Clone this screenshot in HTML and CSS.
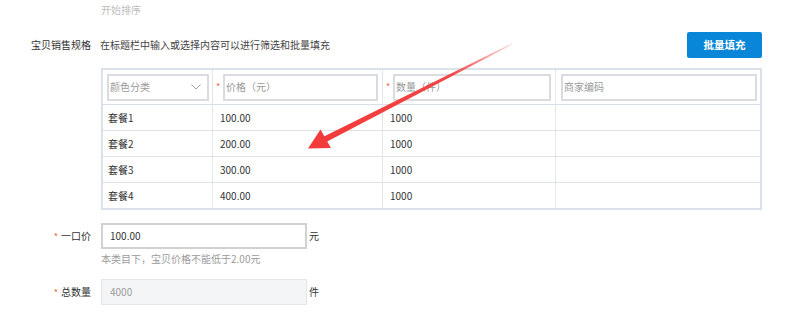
FILE: index.html
```html
<!DOCTYPE html>
<html lang="zh-CN">
<head>
<meta charset="utf-8">
<title>宝贝销售规格</title>
<link rel="stylesheet" href="styles.css">
</head>
<body>
<div class="page">
  <div class="row sort-row">
    <div class="label"></div>
    <div class="content"><span class="muted">开始排序</span></div>
  </div>

  <div class="row spec-head">
    <div class="label">宝贝销售规格</div>
    <div class="content spec-bar">
      <span class="tip">在标题栏中输入或选择内容可以进行筛选和批量填充</span>
      <button class="btn">批量填充</button>
    </div>
  </div>

  <div class="row table-row">
    <div class="label"></div>
    <div class="content">
      <div class="sku">
        <div class="hcell c1">
          <div class="input select">颜色分类
            <svg class="chev" width="10" height="6" viewBox="0 0 10 6"><path d="M0.5 0.5 L5 5 L9.5 0.5" fill="none" stroke="#a0a0a0" stroke-width="1"/></svg>
          </div>
        </div>
        <div class="hcell c2"><span class="req">*</span><div class="input">价格（元）</div></div>
        <div class="hcell c3"><span class="req">*</span><div class="input">数量（件）</div></div>
        <div class="hcell c4"><div class="input">商家编码</div></div>

        <div class="cell first">套餐1</div><div class="cell">100.00</div><div class="cell">1000</div><div class="cell"></div>
        <div class="cell first">套餐2</div><div class="cell">200.00</div><div class="cell">1000</div><div class="cell"></div>
        <div class="cell first">套餐3</div><div class="cell">300.00</div><div class="cell">1000</div><div class="cell"></div>
        <div class="cell first last">套餐4</div><div class="cell last">400.00</div><div class="cell last">1000</div><div class="cell last"></div>
      </div>
    </div>
  </div>

  <div class="row field price-row">
    <div class="label"><span class="req">*</span>一口价</div>
    <div class="content inline">
      <div class="field-input">100.00</div><span class="unit">元</span>
    </div>
  </div>
  <div class="row hint-row">
    <div class="label"></div>
    <div class="content hint">本类目下，宝贝价格不能低于2.00元</div>
  </div>

  <div class="row field qty-row">
    <div class="label"><span class="req">*</span>总数量</div>
    <div class="content inline">
      <div class="field-input disabled">4000</div><span class="unit">件</span>
    </div>
  </div>
</div>

<svg class="arrow" width="800" height="315" viewBox="0 0 800 315">
  <defs>
    <linearGradient id="ag" gradientUnits="userSpaceOnUse" x1="512" y1="44" x2="308" y2="148">
      <stop offset="0" stop-color="#f23a3a" stop-opacity="0.15"/>
      <stop offset="0.3" stop-color="#f23a3a" stop-opacity="0.95"/>
      <stop offset="1" stop-color="#f23a3a" stop-opacity="1"/>
    </linearGradient>
  </defs>
  <polygon fill="url(#ag)" points="308,148.5 331,148 327.2,141.6 512.3,44.5 511.7,43.5 324.4,136.2 320.5,129.5"/>
</svg>
</body>
</html>
```

FILE: styles.css
```css
html, body {
  margin: 0;
  padding: 0;
  background: #ffffff;
}

body {
  font-family: "Noto Sans CJK SC", "Noto Sans", sans-serif;
  font-size: 10px;
  color: #333333;
  position: relative;
  width: 800px;
  height: 315px;
  overflow: hidden;
}

.page {
  width: 762px;
}

.row {
  display: grid;
  grid-template-columns: 91px 661px;
  column-gap: 10px;
}

.label {
  text-align: right;
  color: #333333;
  white-space: nowrap;
}

.sort-row {
  padding-top: 1px;
  line-height: 18px;
}

.muted {
  color: #bcbcbc;
}

.spec-head {
  margin-top: 13px;
  height: 26px;
  align-items: center;
  line-height: 14px;
}

.spec-head .label {
  margin-right: 0;
}

.spec-bar {
  display: flex;
  align-items: center;
  justify-content: space-between;
}

.tip {
  color: #444444;
  margin-left: -1px;
}

.btn {
  width: 75px;
  height: 26px;
  border: none;
  border-radius: 2px;
  background: #0a86d8;
  color: #ffffff;
  font-family: inherit;
  font-size: 10.5px;
  font-weight: 700;
  padding: 0;
  line-height: 26px;
}

.table-row {
  margin-top: 10px;
}

.sku {
  display: grid;
  grid-template-columns: 110px 170px 173px 1fr;
  border: 2px solid #dbe1e9;
  line-height: 14px;
}

.hcell {
  display: flex;
  align-items: center;
  padding: 4px 4px 4px 3px;
  border-right: 1px solid #e1e6ed;
  border-bottom: 1px solid #d8dee7;
  height: 26px;
}

.hcell.c1 {
  padding-left: 4px;
  padding-right: 3px;
}

.hcell.c4 {
  padding-left: 5px;
  padding-right: 3px;
  border-right: none;
}

.hcell .req {
  width: 7px;
  flex: none;
}

.input {
  flex: 1;
  height: 27px;
  box-sizing: border-box;
  border: 2px solid #d9dce1;
  color: #9a9a9a;
  padding-left: 1px;
  display: flex;
  align-items: center;
}

.select {
  justify-content: space-between;
  padding-right: 6px;
}

.chev {
  display: block;
}

.req {
  color: #f2673a;
  font-size: 9px;
}

.cell {
  height: 25px;
  display: flex;
  align-items: center;
  padding: 0 7px;
  border-right: 1px solid #e1e6ed;
  border-bottom: 1px solid #dfe4eb;
  color: #333333;
}

.cell.first {
  padding-left: 5px;
}

.cell:nth-child(4n) {
  border-right: none;
}

.cell.last {
  border-bottom: none;
}

.field {
  align-items: center;
  line-height: 14px;
}

.field .label .req {
  margin-right: 3px;
}

.price-row {
  margin-top: 13px;
}

.inline {
  display: flex;
  align-items: center;
}

.field-input {
  width: 206px;
  height: 26px;
  box-sizing: border-box;
  border: 2px solid #d2d2d2;
  padding-left: 7px;
  display: flex;
  align-items: center;
  color: #333333;
}

.field-input.disabled {
  background: #f4f5f7;
  border: 1px solid #e4e6ea;
  padding-left: 8px;
  color: #9a9a9a;
}

.unit {
  margin-left: 2px;
  margin-top: -1px;
}

.hint-row {
  margin-top: 4px;
  line-height: 12px;
}

.hint {
  color: #9a9a9a;
}

.qty-row {
  margin-top: 14px;
}

.arrow {
  position: absolute;
  left: 0;
  top: 0;
  pointer-events: none;
}
```
